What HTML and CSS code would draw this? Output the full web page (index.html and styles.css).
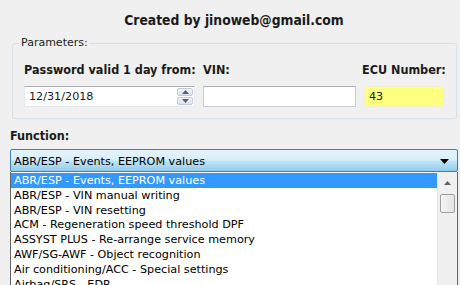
FILE: index.html
```html
<!DOCTYPE html>
<html>
<head>
<meta charset="utf-8">
<link rel="stylesheet" href="styles.css">
</head>
<body>
<div class="window">
  <div class="title">Created by jinoweb@gmail.com</div>
  <fieldset class="params">
    <legend class="legend">Parameters:</legend>
    <div class="fields">
      <div class="field f-date">
        <div class="label">Password valid 1 day from:</div>
        <div class="input date">
          <span class="val">12/31/2018</span>
          <span class="spin">
            <span class="spin-btn"><svg width="7" height="4" viewBox="0 0 7 4"><path d="M0 4 L3.5 0 L7 4 Z" fill="#4d6185"/></svg></span>
            <span class="spin-btn"><svg width="7" height="4" viewBox="0 0 7 4"><path d="M0 0 L7 0 L3.5 4 Z" fill="#4d6185"/></svg></span>
          </span>
        </div>
      </div>
      <div class="field f-vin">
        <div class="label">VIN:</div>
        <div class="input vin"></div>
      </div>
      <div class="field f-ecu">
        <div class="label">ECU Number:</div>
        <div class="input ecu"><span class="val">43</span></div>
      </div>
    </div>
  </fieldset>
  <div class="func-label">Function:</div>
  <div class="combo">
    <span class="combo-text">ABR/ESP - Events, EEPROM values</span>
    <svg class="combo-arrow" width="9" height="5" viewBox="0 0 9 5"><path d="M0 0 L9 0 L4.5 5 Z" fill="#000"/></svg>
  </div>
  <div class="list">
    <div class="items">
      <div class="item sel">ABR/ESP - Events, EEPROM values</div>
      <div class="item">ABR/ESP - VIN manual writing</div>
      <div class="item">ABR/ESP - VIN resetting</div>
      <div class="item">ACM - Regeneration speed threshold DPF</div>
      <div class="item">ASSYST PLUS - Re-arrange service memory</div>
      <div class="item">AWF/SG-AWF - Object recognition</div>
      <div class="item">Air conditioning/ACC - Special settings</div>
      <div class="item">Airbag/SRS - EDR</div>
    </div>
    <div class="scrollbar">
      <div class="sb-up"><svg width="7" height="4" viewBox="0 0 7 4"><path d="M0 4 L3.5 0 L7 4 Z" fill="#606060"/></svg></div>
      <div class="sb-thumb"></div>
    </div>
  </div>
</div>
</body>
</html>
```

FILE: styles.css
```css
html, body {
  margin: 0;
  padding: 0;
}
body {
  width: 460px;
  height: 285px;
  overflow: hidden;
  background: #f0f0f0;
  font-family: "DejaVu Sans", Verdana, sans-serif;
  font-size: 11.2px;
  color: #1a1a1a;
}
.window {
  width: 460px;
  height: 285px;
  overflow: hidden;
}
.title {
  height: 37px;
  box-sizing: border-box;
  padding-top: 12px;
  padding-left: 8px;
  text-align: center;
  font-weight: bold;
  font-size: 13.75px;
  line-height: 16px;
  font-stretch: condensed;
  font-family: "DejaVu Sans Condensed", "DejaVu Sans", sans-serif;
}
.params {
  margin: 0 3px 0 12px;
  padding: 14px 0 11px 11px;
  border: 1px solid #d5dfe5;
  border-radius: 3px;
  min-width: 0;
}
.legend {
  padding: 0 1px;
  margin-left: -4px;
  line-height: 12px;
  font-size: 11px;
  color: #222;
}
.fields {
  display: flex;
  gap: 8px;
}
.field {
  display: flex;
  flex-direction: column;
  gap: 10px;
}
.f-date { width: 171px; }
.f-vin { width: 153px; }
.f-ecu { width: 80px; }
.label {
  font-weight: bold;
  line-height: 13px;
  font-family: "DejaVu Sans Condensed", "DejaVu Sans", sans-serif;
  font-stretch: condensed;
  font-size: 12.5px;
  white-space: nowrap;
}
.f-ecu .label {
  margin-left: -2px;
}
.input {
  height: 21px;
  box-sizing: border-box;
  background: #fff;
  border: 1px solid #e3e9ef;
  border-top-color: #abadb3;
  display: flex;
  align-items: center;
}
.input .val {
  padding-left: 4px;
  flex: 1;
}
.date {
  padding-right: 1px;
}
.spin {
  width: 16px;
  height: 17px;
  display: flex;
  flex-direction: column;
  gap: 1px;
}
.spin-btn {
  flex: 1;
  display: flex;
  align-items: center;
  justify-content: center;
  background: linear-gradient(#f2f3f7, #dde1ea);
  border: 1px solid #c3c9d6;
  border-radius: 2px;
}
.vin {
  border-color: #c9ced6;
  border-top-color: #abadb3;
}
.ecu {
  background: #ffff80;
  border-color: #f0f0d0;
}
.func-label {
  margin: 10px 0 0 10px;
  font-weight: bold;
  line-height: 13px;
  font-size: 12.5px;
  font-family: "DejaVu Sans Condensed", "DejaVu Sans", sans-serif;
  font-stretch: condensed;
}
.combo {
  margin: 7px 0 0 10px;
  width: 448px;
  height: 23px;
  box-sizing: border-box;
  border: 1px solid #3c7fb1;
  border-radius: 2px;
  background: linear-gradient(#e5f4fc 0%, #d9effa 45%, #bde3f6 55%, #93cbec 100%);
  display: flex;
  align-items: center;
  padding: 1px 8px 0 3px;
}
.combo-text {
  flex: 1;
  color: #000;
}
.list {
  margin-left: 10px;
  width: 448px;
  height: 140px;
  box-sizing: border-box;
  border: 1px solid #646464;
  border-top: none;
  background: #fff;
  display: flex;
}
.items {
  flex: 1;
  padding-top: 1px;
}
.item {
  height: 14.8px;
  line-height: 15px;
  padding-left: 3px;
  white-space: nowrap;
  color: #000;
}
.item.sel {
  background: #3399ff;
  color: #fff;
}
.scrollbar {
  width: 19px;
  background: #f0f0f0;
  border-left: 1px solid #e8e8e8;
  display: flex;
  flex-direction: column;
  align-items: center;
}
.sb-up {
  margin-top: 2px;
  height: 17px;
  width: 17px;
  display: flex;
  align-items: center;
  justify-content: center;
}
.sb-thumb {
  margin-top: 3px;
  width: 15px;
  height: 19px;
  box-sizing: border-box;
  border: 1px solid #a0a0a0;
  border-radius: 2px;
  background: linear-gradient(90deg, #f4f4f4, #e4e4e4);
}
```
